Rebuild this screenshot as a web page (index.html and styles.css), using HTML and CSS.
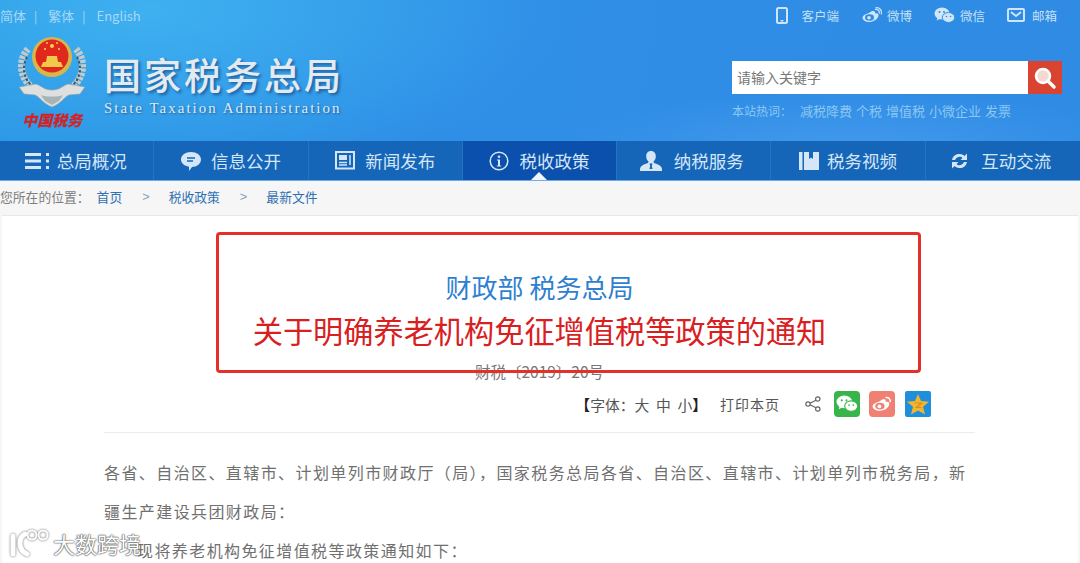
FILE: index.html

```html
<!DOCTYPE html>
<html lang="zh-CN">
<head>
    <meta charset="UTF-8">
    <title>国家税务总局</title>
    <link rel="stylesheet" href="styles.css">
</head>
<body>
    <header class="header">
        <div class="top-bar">
            <div class="lang-links">
                <span>简体</span><i>|</i><span>繁体</span><i>|</i><span>English</span>
            </div>
            <div class="top-links">
                <a class="top-link top-link-app">
                    <svg width="12" height="17" viewBox="0 0 12 17"><rect x="1" y="1" width="10" height="15" rx="1.5" fill="none" stroke="#cfe6f8" stroke-width="2"/><rect x="4.5" y="13" width="3" height="1.5" fill="#cfe6f8"/></svg>
                    客户端
                </a>
                <a class="top-link">
                    <svg width="21" height="17" viewBox="0 0 21 17"><path d="M8 6c3-2.500 5.500-2.500 6-1 .3 1 0 1.500 0 1.500 2-.6 3.500 0 3.500 1.800 0 3-4 6.700-9 6.700-4 0-7-1.800-7-4.500 0-1.500 2.500-3.500 6.500-4.500z" fill="#cfe6f8"/><ellipse cx="8.500" cy="10.500" rx="4.500" ry="3.200" fill="#2f8de4"/><circle cx="8" cy="10.800" r="1.800" fill="#cfe6f8"/><path d="M14 2.500c2.500-.8 5 1.500 4.300 4.200M14.500 0.800c4-.8 6.800 2.500 5.700 6.500" fill="none" stroke="#cfe6f8" stroke-width="1.200"/></svg>
                    微博
                </a>
                <a class="top-link">
                    <svg width="21" height="17" viewBox="0 0 21 17"><ellipse cx="8" cy="6.500" rx="7.500" ry="6" fill="#cfe6f8"/><path d="M3.500 10.500l-.8 3 3.500-1.800z" fill="#cfe6f8"/><ellipse cx="14.500" cy="10.500" rx="6.200" ry="5" fill="#cfe6f8" stroke="#2f8de4"/><circle cx="5.500" cy="5" r="1" fill="#2f8de4"/><circle cx="10" cy="5" r="1" fill="#2f8de4"/><circle cx="12.500" cy="9.500" r=".8" fill="#2f8de4"/><circle cx="16.500" cy="9.500" r=".8" fill="#2f8de4"/></svg>
                    微信
                </a>
                <a class="top-link top-link-mail">
                    <svg width="18" height="14" viewBox="0 0 18 14"><rect x="1" y="1" width="16" height="12" rx="1" fill="none" stroke="#cfe6f8" stroke-width="2"/><path d="M4 4l5 4 5-4" fill="none" stroke="#cfe6f8" stroke-width="1.800"/></svg>
                    邮箱
                </a>
            </div>
        </div>
        <div class="head-main">
            <div class="brand">
                <svg class="emblem" width="70" height="98" viewBox="0 0 70 98">
                    <path d="M11 14C0 26 3 46 19 55" fill="none" stroke="#c3cbcc" stroke-width="7" stroke-dasharray="3 1.200"/>
                    <path d="M59 14c11 12 8 32-8 41" fill="none" stroke="#c3cbcc" stroke-width="7" stroke-dasharray="3 1.200"/>
                    <path d="M10 22c-5 9-4 21 5 29M60 22c5 9 4 21-5 29" fill="none" stroke="#46565f" stroke-width="2" stroke-dasharray="2.500 2"/>
                    <circle cx="35" cy="22" r="20" fill="#d9b64a"/>
                    <circle cx="35" cy="21" r="16.500" fill="#e0281c"/>
                    <path d="M24 32h22l-2-5H26zM29 27l1-6h10l1 6z" fill="#f0c84a"/>
                    <circle cx="35" cy="11" r="2" fill="#f5d04e"/>
                    <circle cx="28" cy="14" r="1.100" fill="#f5d04e"/>
                    <circle cx="42" cy="14" r="1.100" fill="#f5d04e"/>
                    <circle cx="30" cy="8" r="1" fill="#f5d04e"/>
                    <circle cx="40" cy="8" r="1" fill="#f5d04e"/>
                    <path d="M2 52l17-3c6 2 8 6 16 6s10-4 16-6l17 3-5 7-11 1c-5 2-7 8-17 12-10-4-12-10-17-12L7 59z" fill="#dde0de" stroke="#8d9a9f" stroke-width=".6"/>
                    <path d="M24 60c5 2 17 2 22 0l-4 6-7 4-7-4z" fill="#a9b3b5"/>
                    <text class="emblem-text" x="35" y="91" text-anchor="middle">中国税务</text>
                </svg>
                <div class="brand-text">
                    <h1>国家税务总局</h1>
                    <p>State Taxation Administration</p>
                </div>
            </div>
            <div class="search-area">
                <div class="search-box">
                    <span class="search-input">请输入关键字</span>
                    <span class="search-btn">
                        <svg width="24" height="24" viewBox="0 0 24 24"><circle cx="10" cy="10" r="7" fill="#f4d9d2" stroke="#fff" stroke-width="2.500"/><path d="M15 15l6 6" stroke="#fff" stroke-width="3.500" stroke-linecap="round"/></svg>
                    </span>
                </div>
                <div class="hot-words">
                    <em>本站热词：</em><span>减税降费</span><span>个税</span><span>增值税</span><span>小微企业</span><span>发票</span>
                </div>
            </div>
        </div>
    </header>

    <nav class="nav">
        <a class="nav-item">
            <svg width="24" height="16" viewBox="0 0 24 16"><path d="M0 1.500h16M0 8h16M0 14.500h16" stroke="#d4e6f7" stroke-width="3"/><path d="M22.500 0v3M22.500 6.500v3M22.500 13v3" stroke="#d4e6f7" stroke-width="3"/></svg>
            总局概况
        </a>
        <a class="nav-item">
            <svg width="20" height="20" viewBox="0 0 20 20"><path d="M10 1c5.500 0 10 3 10 7.500S15.500 16 11 16l-3 4v-4.300C3.500 15 0 12.500 0 8.500 0 4 4.500 1 10 1z" fill="#d4e6f7"/><path d="M6 7h8M6 10h6" stroke="#1565b8" stroke-width="1.500"/></svg>
            信息公开
        </a>
        <a class="nav-item">
            <svg width="20" height="19" viewBox="0 0 20 19"><rect x="1" y="1" width="18" height="16.500" fill="none" stroke="#d4e6f7" stroke-width="2"/><rect x="4" y="4" width="8" height="5" fill="#d4e6f7"/><path d="M4 11.500h8M4 14h8M15 4v10" stroke="#d4e6f7" stroke-width="1.500"/></svg>
            新闻发布
        </a>
        <a class="nav-item nav-item-active">
            <svg width="20" height="20" viewBox="0 0 20 20"><circle cx="10" cy="10" r="8.800" fill="none" stroke="#d4e6f7" stroke-width="1.500"/><circle cx="10" cy="5.800" r="1.300" fill="#d4e6f7"/><path d="M8 8.500h3v6h1.200v1H7.800v-1H9v-5H8z" fill="#d4e6f7"/></svg>
            税收政策
        </a>
        <a class="nav-item nav-item-wide">
            <svg width="22" height="20" viewBox="0 0 22 20"><path d="M11 0c3 0 4.800 2.200 4.800 5.200 0 2.300-1 4.300-2.300 5.300l.5 1.500c3.500 1 8 2.500 8 6.500V20H0v-1.500c0-4 4.500-5.500 8-6.500l.5-1.500C7.200 9.500 6.200 7.500 6.200 5.200 6.200 2.200 8 0 11 0z" fill="#d4e6f7"/><path d="M9.500 12.500h3L11.800 15l.7 3h-3l.7-3z" fill="#1565b8"/></svg>
            纳税服务
        </a>
        <a class="nav-item nav-item-narrow">
            <svg width="20" height="20" viewBox="0 0 20 20"><rect x="0" y="1" width="3.500" height="18" fill="#d4e6f7"/><path d="M5 1h5v7l2-1.500L14 8V1h6v18H5z" fill="#d4e6f7"/></svg>
            税务视频
        </a>
        <a class="nav-item nav-item-wide">
            <svg width="19" height="18" viewBox="0 0 19 18"><path d="M2 8c.8-4 4-6.500 8-6 2 .2 3.500 1 4.500 2L17 1.500V8h-6.500l2-2c-1.500-1.800-5.500-2-7.500 2z" fill="#d4e6f7"/><path d="M17 10c-.8 4-4 6.500-8 6-2-.2-3.500-1-4.500-2L2 16.500V10h6.500l-2 2c1.500 1.800 5.500 2 7.500-2z" fill="#d4e6f7"/></svg>
            互动交流
        </a>
    </nav>

    <div class="breadcrumb">
        <span class="crumb-label">您所在的位置：</span>
        <a>首页</a><i>&gt;</i><a>税收政策</a><i>&gt;</i><a>最新文件</a>
    </div>

    <main class="article">
        <div class="article-head">
            <h2 class="title-dept">财政部 税务总局</h2>
            <h3 class="title-main">关于明确养老机构免征增值税等政策的通知</h3>
            <div class="doc-no">财税〔2019〕20号</div>
            <div class="tools">
                <span class="font-size"><b>【</b>字体：大&nbsp;&nbsp;中&nbsp;&nbsp;小<b>】</b></span>
                <span class="print">打印本页</span>
                <svg class="share-icon" width="16" height="16" viewBox="0 0 16 16"><path d="M12.500 3.500L3.500 8l9 4.500" fill="none" stroke="#666" stroke-width="1.200"/><circle cx="12.800" cy="3" r="2.200" fill="#fff" stroke="#666" stroke-width="1.200"/><circle cx="3" cy="8" r="2.200" fill="#fff" stroke="#666" stroke-width="1.200"/><circle cx="12.800" cy="13" r="2.200" fill="#fff" stroke="#666" stroke-width="1.200"/></svg>
                <span class="share share-wechat">
                    <svg width="22" height="20" viewBox="0 0 21 17"><ellipse cx="8" cy="6.500" rx="7.500" ry="6" fill="#fff"/><path d="M3.500 10.500l-.8 3 3.500-1.800z" fill="#fff"/><ellipse cx="14.500" cy="10.500" rx="6.200" ry="5" fill="#fff" stroke="#38b54a"/><circle cx="5.500" cy="5" r="1" fill="#38b54a"/><circle cx="10" cy="5" r="1" fill="#38b54a"/><circle cx="12.500" cy="9.500" r=".8" fill="#38b54a"/><circle cx="16.500" cy="9.500" r=".8" fill="#38b54a"/></svg>
                </span>
                <span class="share share-weibo">
                    <svg width="22" height="18" viewBox="0 0 21 17"><path d="M8 6c3-2.500 5.500-2.500 6-1 .3 1 0 1.500 0 1.500 2-.6 3.500 0 3.500 1.800 0 3-4 6.700-9 6.700-4 0-7-1.800-7-4.500 0-1.500 2.500-3.500 6.500-4.500z" fill="#fff"/><ellipse cx="8.500" cy="10.500" rx="4.500" ry="3.200" fill="#f08074"/><circle cx="8" cy="10.800" r="1.800" fill="#fff"/><path d="M14 2.500c2.500-.8 5 1.500 4.300 4.200" fill="none" stroke="#fff" stroke-width="1.500"/></svg>
                </span>
                <span class="share share-qzone">
                    <svg width="24" height="24" viewBox="0 0 24 24"><path d="M12 2l3 7 8 .8-6 5 2 7.700-7-4-7 4 2-7.700-6-5L9 9z" fill="#f2b62c"/><path d="M8.500 11h7l-5 4.500h5" fill="none" stroke="#e08a1e" stroke-width="1.200"/></svg>
                </span>
            </div>
        </div>
        <div class="article-body">
            <p>各省、自治区、直辖市、计划单列市财政厅（局），国家税务总局各省、自治区、直辖市、计划单列市税务局，新疆生产建设兵团财政局：</p>
            <p class="indent">现将养老机构免征增值税等政策通知如下：</p>
        </div>
    </main>

    <div class="mark-box"></div>
    <div class="watermark">
        <svg width="42" height="30" viewBox="0 0 42 30"><path d="M5 8v18M17 6C10 10 10 22 19 26" fill="none" stroke="#fff" stroke-width="5" stroke-linecap="round"/><circle cx="24" cy="7" r="4.500" fill="none" stroke="#fff" stroke-width="2"/><circle cx="35" cy="7" r="4.500" fill="none" stroke="#fff" stroke-width="2"/></svg>
        <span>大数跨境</span>
    </div>
</body>
</html>
```

FILE: styles.css

```css
* {
    margin: 0;
    padding: 0;
    box-sizing: border-box;
}

html, body {
    height: 563px;
    overflow: hidden;
}

body {
    position: relative;
    font-family: "Noto Sans CJK SC", "Liberation Sans", sans-serif;
    background: #f6f6f6;
    color: #666;
}

i, em {
    font-style: normal;
}

/* header */
.header {
    height: 141px;
    background:
        radial-gradient(ellipse 420px 170px at 150px 10px, rgba(70, 190, 245, 0.7), rgba(70, 190, 245, 0) 100%),
        radial-gradient(ellipse 300px 60px at 850px 150px, rgba(90, 170, 245, 0.45), rgba(90, 170, 245, 0) 100%),
        linear-gradient(100deg, #2a94e4 0%, #2f8ee6 45%, #2f8be4 100%);
}

.top-bar {
    height: 30px;
    display: flex;
    align-items: center;
    justify-content: space-between;
    padding-right: 23px;
}

.lang-links {
    display: flex;
    align-items: center;
    font-size: 13px;
    color: #a9d8f6;
}

.lang-links i {
    margin: 0 11px 0 8px;
    font-size: 12px;
}

.top-links {
    display: flex;
    align-items: center;
    gap: 22px;
}

.top-link {
    display: flex;
    align-items: center;
    gap: 5px;
    font-size: 12.5px;
    color: #c5e0f6;
}

.top-link-app {
    gap: 13px;
}

.top-link-mail {
    gap: 7px;
}

.head-main {
    height: 111px;
    display: flex;
    justify-content: space-between;
    padding: 5px 18px 0 17px;
}

.brand {
    display: flex;
}

.emblem {
    filter: blur(0.4px);
}

.emblem-text {
    font-family: "Noto Sans CJK SC", sans-serif;
    font-size: 15px;
    font-style: italic;
    font-weight: 900;
    fill: #d81e1e;
}

.brand-text {
    margin: 15px 0 0 17px;
}

.brand-text h1 {
    font-size: 37px;
    line-height: 48px;
    font-weight: 500;
    letter-spacing: 3px;
    color: #e4ebf0;
    text-shadow: 2px 2px 3px rgba(20, 70, 130, 0.7);
}

.brand-text p {
    margin-top: 1px;
    font-family: "Liberation Serif", serif;
    font-size: 15px;
    line-height: 18px;
    letter-spacing: 2px;
    color: #dfeaf3;
    text-shadow: 1px 1px 2px rgba(20, 70, 130, 0.7);
}

.search-area {
    width: 330px;
    padding-top: 26px;
}

.search-box {
    display: flex;
    height: 33px;
    background: #fff;
}

.search-input {
    flex: 1;
    padding-left: 5px;
    font-size: 14px;
    line-height: 33px;
    color: #777;
}

.search-btn {
    width: 34px;
    display: flex;
    align-items: center;
    justify-content: center;
    background: #d9432f;
}

.hot-words {
    display: flex;
    gap: 4px;
    margin-top: 8px;
    font-size: 13px;
    line-height: 18px;
    color: #8cc8f2;
}

.hot-words em {
    font-size: 12px;
    margin-right: 4px;
}

/* nav */
.nav {
    display: grid;
    grid-template-columns: repeat(7, 1fr);
    height: 40px;
    background: #1565b8;
    border-bottom: 1px solid #6aaee8;
}

.nav-item {
    position: relative;
    display: flex;
    align-items: center;
    justify-content: center;
    gap: 10px;
    font-size: 17.5px;
    color: #d4e6f7;
    border-right: 1px solid #2473c4;
}

.nav-item:first-child {
    gap: 8px;
    padding-right: 2px;
}

.nav-item-wide {
    gap: 12px;
    padding-right: 4px;
}

.nav-item-narrow {
    gap: 8px;
}

.nav-item:last-child {
    border-right: none;
}

.nav-item-active {
    background: #0b50ac;
}

.nav-item-active::after {
    content: "";
    position: absolute;
    left: 50%;
    bottom: 0;
    margin-left: -8px;
    border: 8px solid transparent;
    border-top: none;
    border-bottom-color: #f2f6fa;
}

/* breadcrumb */
.breadcrumb {
    height: 34px;
    padding-bottom: 3px;
    display: flex;
    align-items: center;
    font-size: 12.8px;
    color: #7d7d7d;
    background: #f6f6f6;
}

.crumb-label {
    margin-right: 7px;
}

.breadcrumb a {
    color: #2f6fb3;
}

.breadcrumb i {
    margin: 0 19px 0 20px;
    font-family: "Liberation Sans", sans-serif;
    color: #8aa0b8;
}

/* article */
.article {
    height: 348px;
    margin: 0 2px;
    padding: 51px 103px 0 102px;
    background: #fff;
    border-top: 1px solid #e8e8e8;
}

.article-head {
    text-align: center;
    padding-bottom: 13px;
    border-bottom: 1px solid #ececec;
}

.title-dept {
    font-size: 26px;
    line-height: 40px;
    font-weight: 400;
    color: #2f7fd0;
}

.title-main {
    font-size: 30.2px;
    line-height: 46px;
    font-weight: 400;
    color: #d8201f;
}

.doc-no {
    margin-top: 8px;
    font-size: 15.5px;
    line-height: 20px;
    color: #777;
}

.tools {
    height: 30px;
    margin-top: 8px;
    padding-right: 44px;
    display: flex;
    align-items: center;
    justify-content: flex-end;
    font-size: 14px;
    color: #555;
}

.font-size {
    margin-right: 13px;
    font-size: 14.8px;
}

.font-size b {
    color: #222;
}

.print {
    margin-right: 25px;
    letter-spacing: 1px;
}

.share-icon {
    margin-right: 13px;
}

.share {
    width: 26px;
    height: 26px;
    margin-right: 9px;
    display: flex;
    align-items: center;
    justify-content: center;
    border-radius: 4px;
}

.share:last-child {
    margin-right: 0;
}

.share-wechat {
    background: #38b54a;
}

.share-weibo {
    margin-right: 10px;
    background: #f08074;
}

.share-qzone {
    background: #1f8fdc;
    border-radius: 2px;
}

.article-body {
    padding-top: 21px;
    font-family: "Liberation Serif", "Noto Sans CJK SC", serif;
    font-size: 16px;
    line-height: 39px;
    letter-spacing: 1.41px;
    color: #707070;
}

.indent {
    text-indent: 33px;
}

/* annotation and watermark laid over the page */
.mark-box {
    position: absolute;
    left: 216px;
    top: 232px;
    width: 705px;
    height: 141px;
    border: 3px solid #e5302a;
    border-radius: 4px;
}

.watermark {
    position: absolute;
    left: 8px;
    top: 527px;
    display: flex;
    align-items: center;
    gap: 3px;
    font-size: 22px;
    color: #fff;
    text-shadow: 0 0 2px #555, 0 0 1px #555, 0 0 1px #555;
}

.watermark svg {
    filter: drop-shadow(0 0 1px #666);
}
```
